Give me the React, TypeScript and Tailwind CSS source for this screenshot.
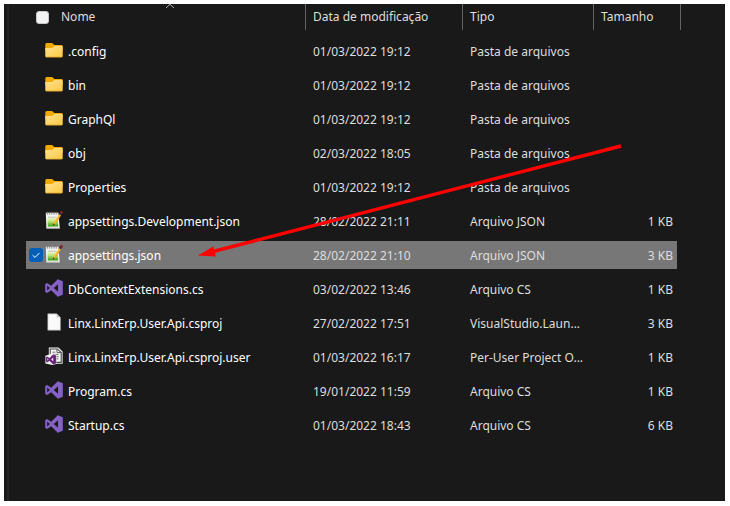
import { useState } from 'react';
import clsx from 'clsx';

type FileKind = 'folder' | 'json' | 'cs' | 'blank' | 'user';

type FileRow = {
  name: string;
  kind: FileKind;
  modified: string;
  type: string;
  size?: string;
};

const files: FileRow[] = [
  { name: '.config', kind: 'folder', modified: '01/03/2022 19:12', type: 'Pasta de arquivos' },
  { name: 'bin', kind: 'folder', modified: '01/03/2022 19:12', type: 'Pasta de arquivos' },
  { name: 'GraphQl', kind: 'folder', modified: '01/03/2022 19:12', type: 'Pasta de arquivos' },
  { name: 'obj', kind: 'folder', modified: '02/03/2022 18:05', type: 'Pasta de arquivos' },
  { name: 'Properties', kind: 'folder', modified: '01/03/2022 19:12', type: 'Pasta de arquivos' },
  { name: 'appsettings.Development.json', kind: 'json', modified: '28/02/2022 21:11', type: 'Arquivo JSON', size: '1 KB' },
  { name: 'appsettings.json', kind: 'json', modified: '28/02/2022 21:10', type: 'Arquivo JSON', size: '3 KB' },
  { name: 'DbContextExtensions.cs', kind: 'cs', modified: '03/02/2022 13:46', type: 'Arquivo CS', size: '1 KB' },
  { name: 'Linx.LinxErp.User.Api.csproj', kind: 'blank', modified: '27/02/2022 17:51', type: 'VisualStudio.Laun...', size: '3 KB' },
  { name: 'Linx.LinxErp.User.Api.csproj.user', kind: 'user', modified: '01/03/2022 16:17', type: 'Per-User Project O...', size: '1 KB' },
  { name: 'Program.cs', kind: 'cs', modified: '19/01/2022 11:59', type: 'Arquivo CS', size: '1 KB' },
  { name: 'Startup.cs', kind: 'cs', modified: '01/03/2022 18:43', type: 'Arquivo CS', size: '6 KB' },
];

const VS_PATH = 'M12.8 0.2 17.8 2.2V15.8L12.8 17.8 6.2 11.2 2.2 14 0.2 13V5L2.2 4 6.2 6.8ZM13 5.2 8.8 9 13 12.8ZM2.2 6.6V11.4L4.8 9Z';

function FolderIcon() {
  return (
    <svg viewBox="0 0 18 18" className="size-[18px] shrink-0" aria-hidden="true">
      <defs>
        <linearGradient id="folder" x1="0" y1="0" x2="1" y2="1">
          <stop offset="0" stopColor="#ffe294" />
          <stop offset="1" stopColor="#fbc840" />
        </linearGradient>
      </defs>
      <path d="M0.3 3.5Q0.3 2 1.6 2H6.6Q7.3 2 7.8 2.5L9.3 4H16.5Q17.7 4 17.7 5.2V10H0.3Z" fill="#f2a900" />
      <path d="M0.3 7H6.4Q7.1 7 7.6 6.5L8.6 5.5Q9 5 9.7 5H16.6Q17.7 5 17.7 6.1V15Q17.7 16.2 16.5 16.2H1.5Q0.3 16.2 0.3 15Z" fill="url(#folder)" />
      <path d="M0.5 15.5Q0.9 16.2 1.6 16.2H16.4Q17.2 16.2 17.5 15.4Z" fill="#eeb02c" />
    </svg>
  );
}

function NotepadIcon() {
  return (
    <svg viewBox="0 0 18 18" className="size-[18px] shrink-0" aria-hidden="true">
      <defs>
        <linearGradient id="page" x1="0" y1="0" x2="0" y2="1">
          <stop offset="0" stopColor="#f6f8ea" />
          <stop offset="0.45" stopColor="#c3e67a" />
          <stop offset="1" stopColor="#2f9a10" />
        </linearGradient>
      </defs>
      <path d="M0.8 1.8H13.4L14.8 17.6H1.4Z" fill="#f3f3ef" />
      <path d="M2.4 5.8H12.6L13.2 15.6H2.8Z" fill="url(#page)" />
      <path d="M2.4 0.8V3.6M4.6 0.8V3.6M6.8 0.8V3.6M9 0.8V3.6M11.2 0.8V3.6" stroke="#83837f" strokeWidth="1" />
      <path d="M3 6.2H11.4" stroke="#b4b6ac" strokeWidth="0.8" />
      <path d="M1.4 17.2H14.8" stroke="#a9aaa5" strokeWidth="0.8" />
      <path d="M14.2 3.1 16.1 4.3 10.3 13.4 8.3 14.6 8.4 12.2Z" fill="#f2a51d" />
      <path d="M14.5 3.6 9.2 12" stroke="#ffdc72" strokeWidth="0.7" />
      <path d="M8.4 12.6 9.8 13.6 8.1 14.8Z" fill="#3a2a18" />
      <path d="M13.9 3.1 15 1.4 16.9 2.6 16 4.3Z" fill="#29303b" />
      <circle cx="16.4" cy="1.4" r="1.4" fill="#8c1e25" />
    </svg>
  );
}

function VisualStudioIcon() {
  return (
    <svg viewBox="0 0 18 18" className="size-[18px] shrink-0" aria-hidden="true">
      <path d={VS_PATH} fill="#8661c5" fillRule="evenodd" />
    </svg>
  );
}

function BlankIcon() {
  return (
    <svg viewBox="0 0 18 18" className="size-[18px] shrink-0" aria-hidden="true">
      <path d="M2.8 0.8H11.6L15.4 4.6V17.2H2.8Z" fill="#fafafa" stroke="#a5a5a5" strokeWidth="0.6" />
      <path d="M11.6 0.8V4.6H15.4Z" fill="#c8c8c8" />
    </svg>
  );
}

function UserProjectIcon() {
  return (
    <svg viewBox="0 0 18 18" className="size-[18px] shrink-0" aria-hidden="true">
      <path d="M3.8 0.6H13.4L17.6 4.6V16.8H3.8Z" fill="#f5f5f5" />
      <path d="M5.2 8V2H12.4L16.2 5.4V15.4H11" fill="none" stroke="#4a4a4a" strokeWidth="1.1" />
      <path d="M12 2V5.6H16.2" fill="none" stroke="#4a4a4a" strokeWidth="0.9" />
      <path d="M7.4 5.2H10.4M7.4 7.4H13.6M11.4 9.6H13.6M11.4 11.8H13.6" stroke="#666666" strokeWidth="0.9" />
      <path d="M0.4 8.8 7.2 6.6 11.4 8V17L7.4 18 0.4 16.4Z" fill="#f5f5f5" />
      <path d={VS_PATH} transform="translate(1 7.4) scale(0.56)" fill="#68217a" stroke="#68217a" strokeWidth="0.6" fillRule="evenodd" />
    </svg>
  );
}

const icons: Record<FileKind, () => React.ReactElement> = {
  folder: FolderIcon,
  json: NotepadIcon,
  cs: VisualStudioIcon,
  blank: BlankIcon,
  user: UserProjectIcon,
};

const headings = ['Data de modificação', 'Tipo', 'Tamanho'];

export default function App() {
  const [selected, setSelected] = useState<string[]>(['appsettings.json']);

  function toggle(name: string) {
    setSelected((s) => (s.includes(name) ? s.filter((n) => n !== name) : [...s, name]));
  }

  return (
    <div className="min-h-screen bg-white px-1 pt-1 pb-[5px] font-['Noto_Sans','Open_Sans',sans-serif] text-xs">
      <main className="relative mr-px min-h-[calc(100vh-9px)] overflow-hidden bg-[#191919] pl-[3px]">
        <div className="min-h-[calc(100vh-9px)] border-l-2 border-[#242424] pl-[17px]">
          <table className="w-full table-fixed border-separate border-spacing-0 text-left whitespace-nowrap text-[#dedede]">
            <colgroup>
              <col className="w-[280px]" />
              <col className="w-[157px]" />
              <col className="w-[131px]" />
              <col className="w-[87px]" />
              <col />
            </colgroup>
            <thead>
              <tr>
                <th className="h-[30px] p-0 align-top font-normal">
                  <div className="relative flex h-[26px] items-center gap-3 border-r border-[#636363] pl-[10px]">
                    <input
                      type="checkbox"
                      aria-label="Selecionar tudo"
                      className="size-[13px] appearance-none rounded-[3px] border border-[#c8c8c8] bg-[#f3f3f3]"
                    />
                    <button>Nome</button>
                    <svg viewBox="0 0 10 5" className="absolute top-0 left-[139px] h-[5px] w-[10px]" aria-hidden="true">
                      <path d="M1 4 5 0.3 9 4" fill="none" stroke="#b0b0b0" strokeWidth="1" />
                    </svg>
                  </div>
                </th>
                {headings.map((h) => (
                  <th key={h} className="h-[30px] p-0 align-top font-normal">
                    <div className="flex h-[26px] items-center border-r border-[#636363] pl-[7px]">
                      <button>{h}</button>
                    </div>
                  </th>
                ))}
                <td />
              </tr>
            </thead>
            <tbody>
              {files.map((file) => {
                const Icon = icons[file.kind];
                const isSelected = selected.includes(file.name);
                const cell = clsx('h-[34px] border-y-3 border-[#191919]', isSelected && 'bg-[#777777]');
                return (
                  <tr key={file.name}>
                    <td className={clsx(cell, 'p-0')}>
                      <div className="flex items-center pl-[3px] text-white">
                        <label className={clsx('mr-[2px] grid size-[14px] shrink-0', !isSelected && 'opacity-0')}>
                          <input
                            type="checkbox"
                            aria-label={file.name}
                            checked={isSelected}
                            onChange={() => toggle(file.name)}
                            className="col-start-1 row-start-1 size-[14px] appearance-none rounded-[3px] bg-[#005fb8]"
                          />
                          <svg viewBox="0 0 14 14" className="pointer-events-none col-start-1 row-start-1" aria-hidden="true">
                            <path d="M3.6 7.2 6 9.5 10.4 5" fill="none" stroke="#ffffff" strokeWidth="1" />
                          </svg>
                        </label>
                        <span className="mr-[5px] pb-[2px]">
                          <Icon />
                        </span>
                        <span className="pt-[2px]">{file.name}</span>
                      </div>
                    </td>
                    <td className={clsx(cell, 'pt-[2px] pl-[7px]')}>{file.modified}</td>
                    <td className={clsx(cell, 'pt-[2px] pl-[7px]')}>{file.type}</td>
                    <td className={clsx(cell, 'border-r-4 pt-[2px] pr-1 text-right')}>{file.size}</td>
                    <td />
                  </tr>
                );
              })}
            </tbody>
          </table>
        </div>
        <svg viewBox="0 0 721 497" className="pointer-events-none absolute top-0 left-0 h-[497px] w-[721px]" aria-hidden="true">
          <path d="M617 142 209 247.5" stroke="#ff0000" strokeWidth="3.4" />
          <path d="M194 251.4 209.2 242.4 211.8 252.4Z" fill="#ff0000" />
        </svg>
      </main>
    </div>
  );
}
